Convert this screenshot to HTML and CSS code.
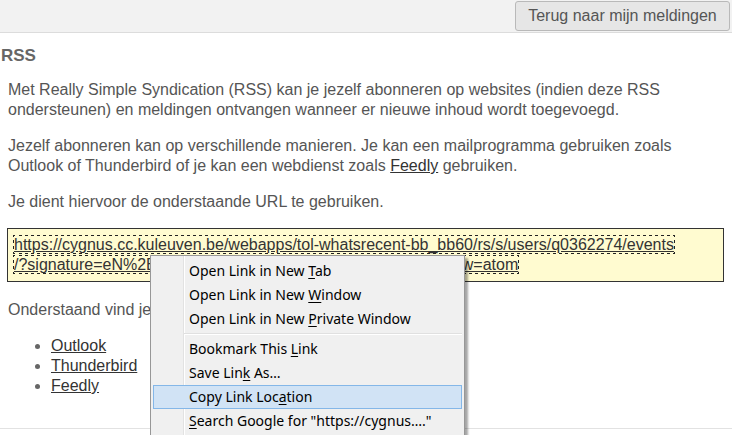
FILE: index.html
```html
<!DOCTYPE html>
<html lang="nl">
<head>
<meta charset="utf-8">
<title>RSS</title>
<link rel="stylesheet" href="styles.css">
</head>
<body>
<div class="topbar">
  <button class="back-btn" type="button">Terug naar mijn meldingen</button>
</div>
<main class="page">
  <h2 class="title">RSS</h2>
  <div class="content">
    <p>Met Really Simple Syndication (RSS) kan je jezelf abonneren op websites (indien deze RSS ondersteunen) en meldingen ontvangen wanneer er nieuwe inhoud wordt toegevoegd.</p>
    <p>Jezelf abonneren kan op verschillende manieren. Je kan een mailprogramma gebruiken zoals Outlook of Thunderbird of je kan een webdienst zoals <a href="#">Feedly</a> gebruiken.</p>
    <p>Je dient hiervoor de onderstaande URL te gebruiken.</p>
    <div class="url-box">
      <a class="url-link" href="#">https://cygnus.cc.kuleuven.be/webapps/tol-whatsrecent-bb_bb60/rs/s/users/q0362274/events<br>/?signature=eN%2BkQ7vR9mXpL3tYwZ0aB4cDx7Hq%3D&amp;view=atom</a>
    </div>
    <p>Onderstaand vind je enkele handleidingen:</p>
    <ul class="guides">
      <li><a href="#">Outlook</a></li>
      <li><a href="#">Thunderbird</a></li>
      <li><a href="#">Feedly</a></li>
    </ul>
  </div>
</main>
<footer class="footer"></footer>

<div class="ctx-menu">
  <div class="ctx-item">Open Link in New <u>T</u>ab</div>
  <div class="ctx-item">Open Link in New <u>W</u>indow</div>
  <div class="ctx-item">Open Link in New <u>P</u>rivate Window</div>
  <div class="ctx-sep"></div>
  <div class="ctx-item">Bookmark This <u>L</u>ink</div>
  <div class="ctx-item">Save Lin<u>k</u> As…</div>
  <div class="ctx-item active">Copy Link Loc<u>a</u>tion</div>
  <div class="ctx-item"><u>S</u>earch Google for "https://cygnus…."</div>
  <div class="ctx-sep"></div>
</div>
</body>
</html>
```

FILE: styles.css
```css
html, body {
  margin: 0;
  padding: 0;
  overflow: hidden;
  background: #ffffff;
}

body {
  font-family: "Liberation Sans", Arial, sans-serif;
  font-size: 16px;
  line-height: 20px;
  color: #555555;
  position: relative;
  height: 435px;
}

.topbar {
  display: flex;
  justify-content: flex-end;
  padding: 1px 2px 1px 0;
  height: 30px;
  background: #f2f2f2;
  border-bottom: 1px solid #dcdcdc;
}

.back-btn {
  font-family: "Liberation Sans", Arial, sans-serif;
  font-size: 16px;
  color: #555555;
  background: #e6e6e6;
  border: 1px solid #b9b9b9;
  border-radius: 3px;
  padding: 0 12px;
  height: 30px;
  width: 215px;
}

.page {
  padding: 0;
}

.title {
  margin: 13px 0 0 0;
  padding-left: 1px;
  font-size: 17px;
  line-height: 20px;
  font-weight: bold;
  color: #666666;
}

.content {
  padding: 0 8px;
}

.content p {
  margin: 14px 0 16px 0;
}

.content p + p {
  margin-top: 16px;
}

a {
  color: #333333;
  text-decoration: underline;
}

.url-box {
  margin: 16px 0 18px -1px;
  width: 703px;
  padding: 6px 6px;
  background: #fffbd0;
  border: 1px solid #333333;
}

.url-link {
  outline: 1px dotted #222222;
  color: #333333;
}

.guides {
  margin: 16px 0 0 0;
  padding-left: 43px;
}

.guides li::marker {
  color: #666666;
}

.footer {
  position: absolute;
  left: 0;
  right: 0;
  top: 428px;
  border-top: 1px solid #e2e2e2;
}

.ctx-menu {
  position: absolute;
  left: 150px;
  top: 255px;
  width: 309px;
  padding: 3px 2px 6px 2px;
  background: #f0f0f0 linear-gradient(to right, transparent 32px, #e2e2e2 32px, #e2e2e2 33px, #ffffff 33px, #ffffff 34px, transparent 34px);
  border: 1px solid #979797;
  box-shadow: 3px 3px 2px rgba(0, 0, 0, 0.35);
  font-family: "Noto Sans", "Open Sans", sans-serif;
  font-size: 14px;
  color: #000000;
}

.ctx-item {
  height: 24px;
  padding-left: 35px;
  white-space: nowrap;
  border: 1px solid transparent;
  box-sizing: border-box;
  line-height: 22px;
}

.ctx-item.active {
  background: #d1e3f5;
  border-color: #84b7e8;
}

.ctx-item u {
  text-decoration-thickness: 1px;
  text-underline-offset: 2px;
}

.ctx-sep {
  margin: 2px 0 2px 31px;
  border-top: 1px solid #e0e0e0;
  border-bottom: 1px solid #ffffff;
  height: 0;
}
```
